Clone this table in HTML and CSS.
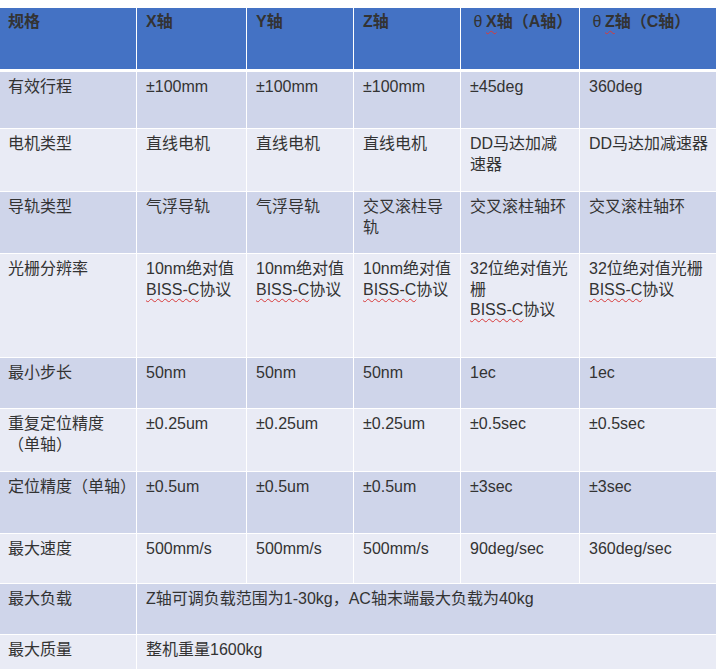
FILE: index.html
```html
<!DOCTYPE html>
<html lang="zh-CN">
<head>
<meta charset="utf-8">
<title>规格</title>
<link rel="stylesheet" href="styles.css">
</head>
<body>
<div class="spec">
  <div class="cell head first">规格</div>
  <div class="cell head">X轴</div>
  <div class="cell head">Y轴</div>
  <div class="cell head">Z轴</div>
  <div class="cell head"><span class="sq"><span class="theta">θ</span>X</span>轴（A轴）</div>
  <div class="cell head"><span class="sq"><span class="theta">θ</span>Z</span>轴（C轴）</div>

  <div class="cell dark first">有效行程</div>
  <div class="cell dark">±100mm</div>
  <div class="cell dark">±100mm</div>
  <div class="cell dark">±100mm</div>
  <div class="cell dark">±45deg</div>
  <div class="cell dark">360deg</div>

  <div class="cell light first">电机类型</div>
  <div class="cell light">直线电机</div>
  <div class="cell light">直线电机</div>
  <div class="cell light">直线电机</div>
  <div class="cell light">DD马达加减<br>速器</div>
  <div class="cell light">DD马达加减速器</div>

  <div class="cell dark first">导轨类型</div>
  <div class="cell dark">气浮导轨</div>
  <div class="cell dark">气浮导轨</div>
  <div class="cell dark">交叉滚柱导<br>轨</div>
  <div class="cell dark">交叉滚柱轴环</div>
  <div class="cell dark">交叉滚柱轴环</div>

  <div class="cell light first">光栅分辨率</div>
  <div class="cell light">10nm绝对值<br><span class="sq">BISS-C</span>协议</div>
  <div class="cell light">10nm绝对值<br><span class="sq">BISS-C</span>协议</div>
  <div class="cell light">10nm绝对值<br><span class="sq">BISS-C</span>协议</div>
  <div class="cell light">32位绝对值光<br>栅<br><span class="sq">BISS-C</span>协议</div>
  <div class="cell light">32位绝对值光栅<br><span class="sq">BISS-C</span>协议</div>

  <div class="cell dark first">最小步长</div>
  <div class="cell dark">50nm</div>
  <div class="cell dark">50nm</div>
  <div class="cell dark">50nm</div>
  <div class="cell dark">1ec</div>
  <div class="cell dark">1ec</div>

  <div class="cell light first">重复定位精度<br>（单轴）</div>
  <div class="cell light">±0.25um</div>
  <div class="cell light">±0.25um</div>
  <div class="cell light">±0.25um</div>
  <div class="cell light">±0.5sec</div>
  <div class="cell light">±0.5sec</div>

  <div class="cell dark first">定位精度（单轴）</div>
  <div class="cell dark">±0.5um</div>
  <div class="cell dark">±0.5um</div>
  <div class="cell dark">±0.5um</div>
  <div class="cell dark">±3sec</div>
  <div class="cell dark">±3sec</div>

  <div class="cell light first">最大速度</div>
  <div class="cell light">500mm/s</div>
  <div class="cell light">500mm/s</div>
  <div class="cell light">500mm/s</div>
  <div class="cell light">90deg/sec</div>
  <div class="cell light">360deg/sec</div>

  <div class="cell dark first">最大负载</div>
  <div class="cell dark wide">Z轴可调负载范围为1-30kg，AC轴末端最大负载为40kg</div>

  <div class="cell light first">最大质量</div>
  <div class="cell light wide">整机重量1600kg</div>
</div>
</body>
</html>
```

FILE: styles.css
```css
html, body {
  overflow: hidden;
}
body {
  margin: 8px 0 0 0;
  background: #ffffff;
  font-family: "Liberation Sans", "Noto Sans CJK SC", sans-serif;
  font-size: 16px;
  color: #333333;
}
.spec {
  display: grid;
  width: 716px;
  grid-template-columns: 136px 109px 106px 106px 118px 1fr;
  grid-template-rows: 63px 56px 62px 61px 103px 50px 62px 61px 49px 50px 50px;
  column-gap: 1px;
  row-gap: 1px;
  background: #ffffff;
}
.cell {
  padding: 5px 7px 0 9px;
  line-height: 20.5px;
  white-space: nowrap;
  overflow: hidden;
}
.cell.first {
  padding-left: 8px;
}
.head {
  background: #4472c4;
  font-weight: bold;
  color: #333333;
  border-bottom: 2px solid #ffffff;
  padding-top: 4px;
}
.dark {
  background: #cfd5ea;
}
.light {
  background: #e9ebf5;
}
.wide {
  grid-column: span 5;
}
.theta {
  display: inline-block;
  width: 16px;
  text-align: center;
  font-weight: normal;
}
.sq {
  text-decoration: underline wavy #d83a3a;
  text-decoration-thickness: 1px;
  text-underline-offset: 3px;
}
```
